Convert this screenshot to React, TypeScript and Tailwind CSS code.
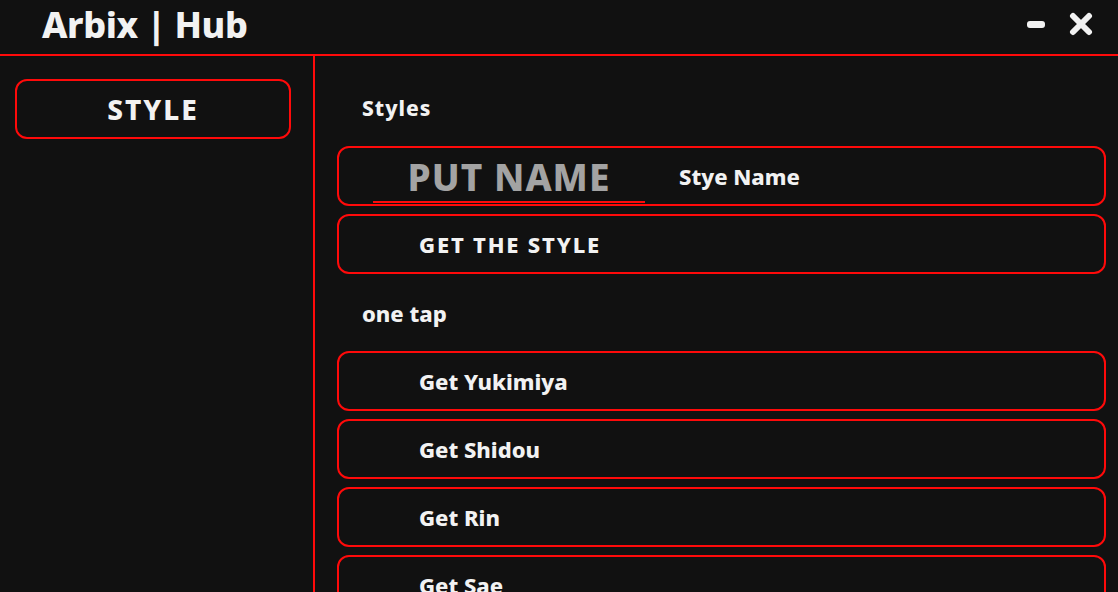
import React from "react";

const font = { fontFamily: '"Noto Sans", "Open Sans", sans-serif' };

function Row({ label, wide }: { label: string; wide?: boolean }) {
  return (
    <div className="h-[60px] shrink-0 rounded-[12px] border-2 border-[#ff0a0a] flex items-center pl-[80px]">
      <span
        className={
          wide
            ? "text-[22px] font-extrabold text-[#f2f2f2] leading-none tracking-[1.8px]"
            : "text-[22px] font-extrabold text-[#f2f2f2] leading-none"
        }
      >
        {label}
      </span>
    </div>
  );
}

export default function App() {
  return (
    <div className="w-[1118px] h-[592px] bg-[#111111] overflow-hidden flex flex-col" style={font}>
      <div className="h-[56px] shrink-0 border-b-2 border-[#ff0a0a] flex items-center pl-[42px] pr-[25px]">
        <h1 className="text-[36px] font-extrabold text-[#f2f2f2] leading-none -mt-[4px] tracking-[-0.4px] whitespace-pre">
          Arbix | Hub
        </h1>
        <div className="ml-auto flex items-center gap-[24px] -mt-[6px]">
          <div className="w-[18px] h-[7px] rounded-[3px] bg-[#f2f2f2]" />
          <svg width="24" height="24" viewBox="0 0 24 24">
            <path d="M4 4 L20 20 M20 4 L4 20" stroke="#f2f2f2" strokeWidth="6" strokeLinecap="round" />
          </svg>
        </div>
      </div>
      <div className="flex flex-1 min-h-0">
        <div className="w-[315px] shrink-0 border-r-2 border-[#ff0a0a] pt-[23px] pl-[15px] pr-[22px]">
          <div className="h-[60px] rounded-[12px] border-2 border-[#ff0a0a] flex items-center justify-center">
            <span className="text-[28px] font-extrabold text-[#f2f2f2] leading-none tracking-[2px]">STYLE</span>
          </div>
        </div>
        <div className="flex-1 pl-[22px] pr-[12px] flex flex-col gap-[8px]">
          <div className="h-[83px] shrink-0 flex items-center pl-[25px] pt-[29px] pb-[8px]">
            <span className="text-[21px] font-extrabold text-[#f2f2f2] leading-none tracking-[1px]">Styles</span>
          </div>
          <div className="-mt-[1px] h-[60px] shrink-0 rounded-[12px] border-2 border-[#ff0a0a] flex items-center">
            <div className="ml-[34px] w-[272px] h-[52px] border-b-2 border-[#ff0a0a] flex items-center justify-center mt-[2px]">
              <span className="text-[37px] font-extrabold text-[#a3a3a3] leading-none tracking-[1px]">PUT NAME</span>
            </div>
            <span className="ml-[34px] text-[22px] font-extrabold text-[#f2f2f2] leading-none">Stye Name</span>
          </div>
          <Row label="GET THE STYLE" wide />
          <div className="h-[61px] shrink-0 flex items-center pl-[25px]">
            <span className="text-[22px] font-extrabold text-[#f2f2f2] leading-none">one tap</span>
          </div>
          <Row label="Get Yukimiya" />
          <Row label="Get Shidou" />
          <Row label="Get Rin" />
          <Row label="Get Sae" />
        </div>
      </div>
    </div>
  );
}
